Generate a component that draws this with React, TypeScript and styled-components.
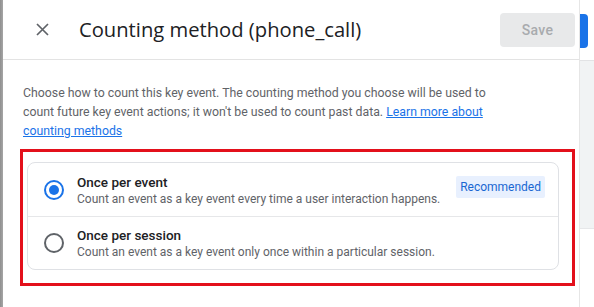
import React, { useState } from "react";
import styled, { createGlobalStyle } from "styled-components";

const Global = createGlobalStyle`
  html, body { margin: 0; padding: 0; background: #ffffff; }
  body { font-family: Roboto, "Noto Sans", Arial, sans-serif; }
  #root { width: 594px; height: 307px; overflow: hidden; }
`;

const Page = styled.div`
  position: relative;
  display: flex;
  width: 594px;
  height: 307px;
  overflow: hidden;
`;

const LeftStrip = styled.div`
  width: 3px;
  flex: 0 0 3px;
  background: linear-gradient(90deg, #8f8f8f 0%, #a6a6a6 100%);
`;

const Dialog = styled.div`
  width: 576px;
  flex: 0 0 576px;
  background: #ffffff;
  box-shadow: 1px 0 0 #e6e6e6, 0 -1px 0 #e8e8e8;
  display: flex;
  flex-direction: column;
  position: relative;
  z-index: 1;
`;

const Header = styled.div`
  height: 60px;
  flex: 0 0 60px;
  border-bottom: 1px solid #e3e3e3;
  display: flex;
  align-items: center;
  padding: 0 4px 0 21px;
  box-sizing: border-box;
`;

const CloseButton = styled.button`
  width: 36px;
  height: 36px;
  border: none;
  background: transparent;
  padding: 0;
  display: flex;
  align-items: center;
  justify-content: center;
  color: #5f6368;
  margin-right: 19px;
  cursor: pointer;
`;

const Title = styled.h1`
  margin: 0 0 1px 0;
  flex: 1;
  font-family: "Open Sans", Roboto, sans-serif;
  font-weight: 400;
  font-size: 20.2px;
  color: #202124;
  letter-spacing: 0;
  white-space: nowrap;
`;

const SaveButton = styled.button`
  width: 75px;
  height: 34px;
  border: none;
  border-radius: 4px;
  background: #e8e9ea;
  color: #a8abae;
  font-family: Roboto, sans-serif;
  font-size: 14px;
  font-weight: 500;
  letter-spacing: 0.25px;
  margin-top: 1px;
`;

const Body = styled.div`
  padding: 24px 20px 0 20px;
`;

const Description = styled.p`
  margin: 0;
  font-family: Roboto, sans-serif;
  font-size: 12.3px;
  line-height: 19px;
  color: #5f6368;
  width: 476px;
`;

const Link = styled.a`
  color: #1a73e8;
  text-decoration: underline;
`;

const Card = styled.div`
  margin: 21px 0 0 4px;
  border: 1px solid #dfe1e5;
  border-radius: 8px;
  display: flex;
  flex-direction: column;
`;

const Option = styled.label<{ $last?: boolean }>`
  display: flex;
  align-items: center;
  height: ${(p) => (p.$last ? 52 : 53)}px;
  padding: 0 13px 0 16px;
  border-bottom: ${(p) => (p.$last ? "none" : "1px solid #e6e7e9")};
  cursor: pointer;
`;

const Radio = styled.span<{ $checked: boolean }>`
  width: 20px;
  height: 20px;
  box-sizing: border-box;
  border-radius: 50%;
  border: 2px solid ${(p) => (p.$checked ? "#1a73e8" : "#5f6368")};
  display: flex;
  align-items: center;
  justify-content: center;
  margin-right: 13px;
  flex: 0 0 20px;
  &::after {
    content: "";
    width: 10px;
    height: 10px;
    border-radius: 50%;
    background: #1a73e8;
    display: ${(p) => (p.$checked ? "block" : "none")};
  }
`;

const OptionText = styled.div`
  flex: 1;
  display: flex;
  flex-direction: column;
`;

const OptionTitle = styled.div`
  font-family: Roboto, sans-serif;
  font-size: 13.5px;
  font-weight: 500;
  color: #202124;
  line-height: 18px;
`;

const OptionSub = styled.div`
  font-family: Roboto, sans-serif;
  font-size: 12px;
  color: #5f6368;
  line-height: 16px;
  white-space: nowrap;
`;

const Chip = styled.span`
  background: #e8f0fe;
  color: #1967d2;
  font-family: Roboto, sans-serif;
  font-size: 12px;
  line-height: 22px;
  padding: 0 4px;
  border-radius: 2px;
  margin-top: -6px;
`;

const RightStrip = styled.div`
  flex: 1;
  display: flex;
  flex-direction: column;
  background: #ffffff;
`;

const RightTop = styled.div`
  height: 61px;
  flex: 0 0 61px;
  border-bottom: 1px solid #e2e3e5;
  box-sizing: border-box;
  padding-top: 14px;
`;

const BlueButton = styled.div`
  width: 9px;
  height: 34px;
  background: #1a73e8;
  border-radius: 0 4px 4px 0;
`;

const RightGrey = styled.div`
  height: 167px;
  background: #f1f3f4;
  border-bottom: 1px solid #e6e7e9;
`;

const Highlight = styled.div`
  position: absolute;
  left: 20px;
  top: 149px;
  width: 555px;
  height: 137px;
  box-sizing: border-box;
  border: 3px solid #e3101b;
  pointer-events: none;
  z-index: 2;
`;

export default function App() {
  const [method, setMethod] = useState("event");
  return (
    <>
      <Global />
      <Page>
        <LeftStrip />
        <Dialog>
          <Header>
            <CloseButton aria-label="Close">
              <svg width="13" height="13" viewBox="0 0 13 13">
                <path d="M1 1L12 12M12 1L1 12" stroke="#5f6368" strokeWidth="1.7" />
              </svg>
            </CloseButton>
            <Title>Counting method (phone_call)</Title>
            <SaveButton disabled>Save</SaveButton>
          </Header>
          <Body>
            <Description>
              Choose how to count this key event. The counting method you choose will be used to count
              future key event actions; it won't be used to count past data.{" "}
              <Link href="#">Learn more about counting methods</Link>
            </Description>
            <Card>
              <Option onClick={() => setMethod("event")}>
                <Radio $checked={method === "event"} />
                <OptionText>
                  <OptionTitle>Once per event</OptionTitle>
                  <OptionSub>Count an event as a key event every time a user interaction happens.</OptionSub>
                </OptionText>
                <Chip>Recommended</Chip>
              </Option>
              <Option $last onClick={() => setMethod("session")}>
                <Radio $checked={method === "session"} />
                <OptionText>
                  <OptionTitle>Once per session</OptionTitle>
                  <OptionSub>Count an event as a key event only once within a particular session.</OptionSub>
                </OptionText>
              </Option>
            </Card>
          </Body>
        </Dialog>
        <RightStrip>
          <RightTop>
            <BlueButton />
          </RightTop>
          <RightGrey />
        </RightStrip>
        <Highlight />
      </Page>
    </>
  );
}
